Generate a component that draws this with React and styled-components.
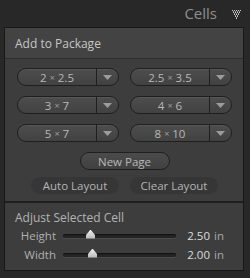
import React from 'react'
import styled, { createGlobalStyle } from 'styled-components';

const sizes = [
    ['2', '2.5'], ['2.5', '3.5'],
    ['3', '7'], ['4', '6'],
    ['5', '7'], ['8', '10'],
];

const sliders = [
    { label: 'Height', value: '2.50', pos: 23 },
    { label: 'Width', value: '2.00', pos: 25 },
];

const App = () => {
    return(
        <Page>
            <GlobalStyle/>
            <TopBar>
                <TopTitle>Cells</TopTitle>
                <DotTriangle/>
            </TopBar>
            <Panel>
                <SectionHead>Add to Package</SectionHead>
                <Body>
                    <ComboGrid>
                        {sizes.map(([a, b]) => (
                            <Combo key={a + b}>
                                <ComboLabel>{a}<Times>×</Times>{b}</ComboLabel>
                                <ComboArrow><DownArrow/></ComboArrow>
                            </Combo>
                        ))}
                    </ComboGrid>
                    <PillButton>New Page</PillButton>
                    <FlatRow>
                        <FlatButton>Auto Layout</FlatButton>
                        <FlatButton>Clear Layout</FlatButton>
                    </FlatRow>
                </Body>
                <Adjust>
                    <AdjustTitle>Adjust Selected Cell</AdjustTitle>
                    {sliders.map(s => (
                        <SliderRow key={s.label}>
                            <SliderLabel>{s.label}</SliderLabel>
                            <Track>
                                <Thumb style={{ left: s.pos }}/>
                            </Track>
                            <Value>{s.value}</Value>
                            <Unit>in</Unit>
                        </SliderRow>
                    ))}
                </Adjust>
            </Panel>
        </Page>
    )
}

export default App;

const DotTriangle = () => {
    const dots = [];
    for (let r = 0; r < 5; r++) {
        for (let c = r; c < 9 - r; c++) {
            if ((c + r) % 2 === 0) dots.push(<rect key={r + '-' + c} x={c} y={r * 2} width="1" height="1" fill="#c8c8c8"/>);
            if (c > r && c < 8 - r && (c + r) % 2 === 1) dots.push(<rect key={'b' + r + '-' + c} x={c} y={r * 2 + 1} width="1" height="1" fill="#9a9a9a"/>);
        }
    }
    return <svg width="9" height="10" viewBox="0 0 9 10" style={{ marginLeft: 15, marginTop: 2 }}>{dots}</svg>;
}

const DownArrow = () => (
    <svg width="9" height="5" viewBox="0 0 9 5">
        <path d="M0 0 H9 L4.5 5 Z" fill="#9c9c9c"/>
    </svg>
);

const GlobalStyle = createGlobalStyle`
body {
    margin: 0;
    background-color: #282828;
    font-family: "Open Sans", "Liberation Sans", sans-serif;
}
`;

const Page = styled.div`
width: 250px;
height: 278px;
background-color: #282828;
overflow: hidden;
`;

const TopBar = styled.div`
height: 27px;
display: flex;
justify-content: flex-end;
align-items: center;
padding-right: 9px;
box-sizing: border-box;
`;

const TopTitle = styled.div`
font-size: 15px;
color: #8f8f8f;
margin-top: -2px;
`;

const Panel = styled.div`
margin: 0 6px 0 4px;
border: 1px solid #171717;
background-color: #3d3d3d;
`;

const SectionHead = styled.div`
height: 30px;
padding-left: 10px;
display: flex;
align-items: center;
font-size: 12px;
color: #c6c6c6;
background-color: #434343;
border-bottom: 1px solid #2e2e2e;
`;

const Body = styled.div`
padding: 9px 12px 7px 13px;
display: flex;
flex-direction: column;
align-items: center;
`;

const ComboGrid = styled.div`
display: grid;
grid-template-columns: 102px 102px;
column-gap: 11px;
row-gap: 10px;
`;

const Combo = styled.div`
height: 18px;
box-sizing: border-box;
display: flex;
border: 1px solid #1f1f1f;
border-radius: 9px;
background: linear-gradient(#4d4d4d, #424242);
box-shadow: inset 0 1px 0 rgba(255,255,255,0.06);
`;

const ComboLabel = styled.div`
flex: 1;
display: flex;
align-items: center;
justify-content: center;
font-size: 11.5px;
color: #b8b8b8;
border-right: 1px solid #1f1f1f;
`;

const Times = styled.span`
font-size: 9px;
margin: 0 3px;
color: #9c9c9c;
`;

const ComboArrow = styled.div`
width: 21px;
display: flex;
align-items: center;
justify-content: center;
`;

const PillButton = styled.div`
margin-top: 10px;
width: 90px;
height: 18px;
box-sizing: border-box;
border: 1px solid #1f1f1f;
border-radius: 9px;
background: linear-gradient(#4b4b4b, #414141);
display: flex;
align-items: center;
justify-content: center;
font-size: 11.5px;
color: #b8b8b8;
`;

const FlatRow = styled.div`
margin-top: 7px;
display: flex;
gap: 11px;
`;

const FlatButton = styled.div`
width: 88px;
height: 17px;
border-radius: 9px;
background-color: #363636;
display: flex;
align-items: center;
justify-content: center;
font-size: 11.5px;
color: #b4b4b4;
`;

const Adjust = styled.div`
border-top: 2px solid #1f1f1f;
padding: 7px 0 6px 10px;
`;

const AdjustTitle = styled.div`
font-size: 12px;
color: #b4b4b4;
height: 16px;
line-height: 16px;
`;

const SliderRow = styled.div`
display: flex;
align-items: center;
height: 19px;
`;

const SliderLabel = styled.div`
width: 41px;
text-align: right;
font-size: 11.5px;
color: #b0b0b0;
`;

const Track = styled.div`
position: relative;
margin-left: 7px;
width: 113px;
height: 4px;
border-radius: 2px;
background-color: #242424;
box-shadow: inset 0 1px 1px #111, 0 1px 0 #4a4a4a;
`;

const Thumb = styled.div`
position: absolute;
top: -4px;
width: 9px;
height: 9px;
background: linear-gradient(#f0f0f0, #b8b8b8);
clip-path: polygon(50% 0, 100% 60%, 100% 100%, 0 100%, 0 60%);
`;

const Value = styled.div`
width: 34px;
text-align: right;
font-size: 11.5px;
color: #dcdcdc;
`;

const Unit = styled.div`
margin-left: 4px;
font-size: 11.5px;
color: #a8a8a8;
`;
